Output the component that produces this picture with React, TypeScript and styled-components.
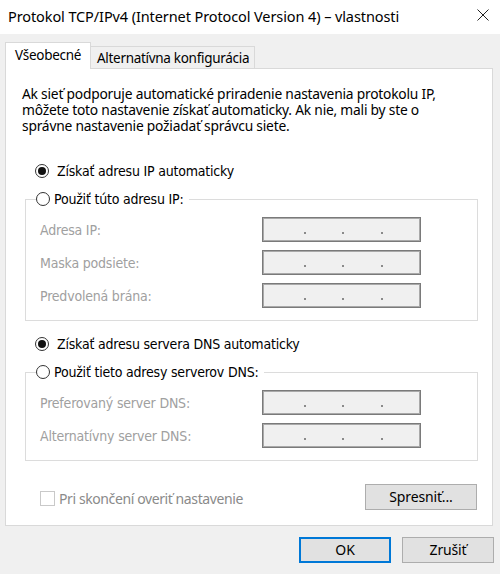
import React from "react";
import styled, { createGlobalStyle } from "styled-components";

const GlobalStyle = createGlobalStyle`
    html, body {
        margin: 0;
        padding: 0;
        background: #f0f0f0;
    }
    body {
        font-family: "Noto Sans", "Open Sans", sans-serif;
        color: #000;
    }
`

const WindowDiv = styled.div`
    width: 500px;
    height: 574px;
    display: flex;
    flex-direction: column;
    background: #f0f0f0;
    box-sizing: border-box;
`

const TitleBar = styled.div`
    height: 34px;
    background: #fff;
    display: flex;
    align-items: center;
    justify-content: space-between;
    padding: 0 8px 2px 8px;
    box-sizing: border-box;
`

const TitleText = styled.span`
    font-size: 14.5px;
    letter-spacing: -0.1px;
`

const CloseIcon = styled.svg`
    width: 12px;
    height: 12px;
    margin-right: 3px;
    margin-bottom: 2px;
`

const Body = styled.div`
    padding: 9px 6px 0 5px;
    display: flex;
    flex-direction: column;
`

const TabsRow = styled.div`
    display: flex;
    align-items: flex-end;
    height: 26px;
    position: relative;
    z-index: 1;
    margin-bottom: -1px;
`

const Tab = styled.div<{ $active?: boolean }>`
    box-sizing: border-box;
    height: ${p => (p.$active ? "27px" : "23px")};
    padding: ${p => (p.$active ? "0 9px" : "0 5px 0 6px")};
    display: flex;
    align-items: center;
    font-size: 13.5px;
    letter-spacing: -0.3px;
    background: ${p => (p.$active ? "#fff" : "#f0f0f0")};
    border: 1px solid #d9d9d9;
    border-bottom: ${p => (p.$active ? "none" : "1px solid #d9d9d9")};
    border-left: ${p => (p.$active ? "1px solid #d9d9d9" : "none")};
    padding-bottom: ${p => (p.$active ? "2px" : "0")};
`

const Panel = styled.div`
    background: #fff;
    border: 1px solid #d9d9d9;
    height: 458px;
    margin-right: 1px;
    box-sizing: border-box;
    padding: 17px 15px 0 16px;
    display: flex;
    flex-direction: column;
`

const Description = styled.p`
    margin: 0;
    font-size: 13.8px;
    line-height: 16px;
    letter-spacing: -0.22px;
`

const RadioRow = styled.label<{ $top: number }>`
    display: flex;
    align-items: center;
    height: 20px;
    margin: ${p => p.$top}px 0 0 13px;
    font-family: "DejaVu Sans Condensed", "DejaVu Sans", sans-serif;
    font-size: 14px;
    letter-spacing: -0.2px;
`

const RadioCircle = styled.span<{ $checked?: boolean }>`
    width: 14px;
    height: 14px;
    border-radius: 50%;
    border: 1px solid #333;
    box-sizing: border-box;
    display: flex;
    align-items: center;
    justify-content: center;
    margin-right: 8px;
    background: #fff;

    &::after {
        content: "";
        display: ${p => (p.$checked ? "block" : "none")};
        width: 8px;
        height: 8px;
        border-radius: 50%;
        background: #111;
    }
`

const Group = styled.fieldset<{ $top: number }>`
    margin: ${p => p.$top}px 0 0 3px;
    width: 453px;
    box-sizing: border-box;
    border: 1px solid #dcdcdc;
    padding: 8px 0 12px 14px;
    display: flex;
    flex-direction: column;
    gap: 8px;
`

const Legend = styled.legend`
    padding: 0 6px 0 0;
    margin-left: -4px;
    height: 20px;
    display: flex;
    align-items: center;
    font-family: "DejaVu Sans Condensed", "DejaVu Sans", sans-serif;
    font-size: 14px;
    letter-spacing: -0.2px;
`

const LegendRadio = styled(RadioCircle)`
    margin-right: 4px;
`

const FieldRow = styled.div`
    display: grid;
    grid-template-columns: 222px 159px;
    align-items: center;
    height: 25px;
`

const FieldLabel = styled.span`
    font-family: "DejaVu Sans Condensed", "DejaVu Sans", sans-serif;
    font-size: 14px;
    letter-spacing: -0.2px;
    color: #a0a0a0;
`

const IpBox = styled.div`
    height: 25px;
    box-sizing: border-box;
    background: #f0f0f0;
    border: 1px solid #7a7a7a;
    box-shadow: inset 0 0 0 1px #a9a9a9;
    position: relative;
`

const IpDot = styled.span<{ $left: number }>`
    position: absolute;
    left: ${p => p.$left}px;
    top: 14px;
    width: 2px;
    height: 2px;
    background: #8a8a8a;
`

const BottomRow = styled.div`
    margin-top: 23px;
    display: flex;
    align-items: center;
    justify-content: space-between;
    height: 26px;
`

const CheckLabel = styled.label`
    display: flex;
    align-items: center;
    margin-left: 18px;
    margin-top: 2px;
    font-size: 14px;
    letter-spacing: -0.4px;
    color: #8a8a8a;
`

const CheckBox = styled.span`
    width: 15px;
    height: 15px;
    box-sizing: border-box;
    border: 1px solid #c9c9c9;
    margin-right: 4px;
`

const Button = styled.button<{ $width: number; $default?: boolean }>`
    width: ${p => p.$width}px;
    height: 26px;
    box-sizing: border-box;
    background: #e1e1e1;
    border: ${p => (p.$default ? "2px solid #0078d7" : "1px solid #adadad")};
    font-family: "Noto Sans", "Open Sans", sans-serif;
    font-size: 14px;
    letter-spacing: -0.15px;
    color: #000;
    padding: 0 0 2px 0;
    margin: 0;
`

const Footer = styled.div`
    display: flex;
    justify-content: flex-end;
    gap: 11px;
    padding: 11px 0 0 0;
`

const dots = [41, 79, 118];

const IpField: React.FC = () => (
    <IpBox>
        {dots.map(d => (
            <IpDot key={d} $left={d} />
        ))}
    </IpBox>
)

const App: React.FC = () => {
    return (
        <WindowDiv>
            <GlobalStyle />
            <TitleBar>
                <TitleText>Protokol TCP/IPv4 (Internet Protocol Version 4) – vlastnosti</TitleText>
                <CloseIcon viewBox="0 0 12 12">
                    <path d="M0.5 0.5 L11.5 11.5 M11.5 0.5 L0.5 11.5" stroke="#222" strokeWidth="1" fill="none" />
                </CloseIcon>
            </TitleBar>
            <Body>
                <TabsRow>
                    <Tab $active>Všeobecné</Tab>
                    <Tab>Alternatívna konfigurácia</Tab>
                </TabsRow>
                <Panel>
                    <Description>
                        Ak sieť podporuje automatické priradenie nastavenia protokolu IP,<br />
                        môžete toto nastavenie získať automaticky. Ak nie, mali by ste o<br />
                        správne nastavenie požiadať správcu siete.
                    </Description>
                    <RadioRow $top={27}>
                        <RadioCircle $checked />
                        Získať adresu IP automaticky
                    </RadioRow>
                    <Group $top={8}>
                        <Legend>
                            <LegendRadio />
                            Použiť túto adresu IP:
                        </Legend>
                        <FieldRow>
                            <FieldLabel>Adresa IP:</FieldLabel>
                            <IpField />
                        </FieldRow>
                        <FieldRow>
                            <FieldLabel>Maska podsiete:</FieldLabel>
                            <IpField />
                        </FieldRow>
                        <FieldRow>
                            <FieldLabel>Predvolená brána:</FieldLabel>
                            <IpField />
                        </FieldRow>
                    </Group>
                    <RadioRow $top={13}>
                        <RadioCircle $checked />
                        Získať adresu servera DNS automaticky
                    </RadioRow>
                    <Group $top={8}>
                        <Legend>
                            <LegendRadio />
                            Použiť tieto adresy serverov DNS:
                        </Legend>
                        <FieldRow>
                            <FieldLabel>Preferovaný server DNS:</FieldLabel>
                            <IpField />
                        </FieldRow>
                        <FieldRow>
                            <FieldLabel>Alternatívny server DNS:</FieldLabel>
                            <IpField />
                        </FieldRow>
                    </Group>
                    <BottomRow>
                        <CheckLabel>
                            <CheckBox />
                            Pri skončení overiť nastavenie
                        </CheckLabel>
                        <Button $width={112}>Spresniť...</Button>
                    </BottomRow>
                </Panel>
                <Footer>
                    <Button $width={92} $default>OK</Button>
                    <Button $width={92}>Zrušiť</Button>
                </Footer>
            </Body>
        </WindowDiv>
    )
}

export default App;
